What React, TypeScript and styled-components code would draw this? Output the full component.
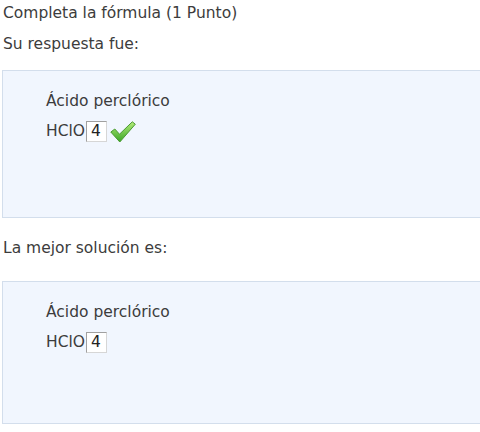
import React from 'react'
import styled, { createGlobalStyle } from 'styled-components'

const GlobalStyle = createGlobalStyle`
  html, body {
    margin: 0;
    padding: 0;
    background: #ffffff;
  }
  body {
    font-family: 'DejaVu Sans', Verdana, sans-serif;
    font-size: 15.5px;
    color: #3c3c3c;
  }
`

const Page = styled.div`
  display: flex;
  flex-direction: column;
  padding: 2px 0 0 2px;
  width: 478px;
  overflow: hidden;
`

const Line = styled.p`
  margin: 0;
  line-height: 22px;
  padding-left: 1px;
`

const Title = styled(Line)`
  margin-bottom: 9px;
`

const Heading = styled(Line)`
  margin-bottom: 15px;
`

const Label = styled(Line)`
  margin: 19px 0 22px;
`

const Panel = styled.div<{ $height: number }>`
  background: #f1f6fe;
  border: 1px solid #d3deec;
  border-right: none;
  height: ${(p) => p.$height}px;
  box-sizing: border-box;
  padding: 19px 0 0 43px;
  width: 520px;
`

const Name = styled.div`
  line-height: 22px;
  margin-bottom: 8px;
`

const Formula = styled.div`
  display: flex;
  align-items: center;
  height: 22px;
`

const Field = styled.span`
  display: inline-flex;
  align-items: center;
  box-sizing: border-box;
  width: 21px;
  height: 21px;
  padding-left: 4px;
  margin-left: 1px;
  background: #ffffff;
  border: 1px solid #d6d6d6;
  border-left-color: #a0a0a0;
  border-top-color: #a0a0a0;
  color: #222222;
`

const CheckMark = styled.svg`
  flex-shrink: 0;
  margin: 2px 0 0 3px;
`

const Check = () => (
  <CheckMark width="26" height="22" viewBox="0 0 26 22">
    <defs>
      <linearGradient id="chk" x1="0" y1="0" x2="0" y2="1">
        <stop offset="0" stopColor="#b4ec7a" />
        <stop offset="1" stopColor="#3aa526" />
      </linearGradient>
    </defs>
    <path
      d="M0.8 11 L4.8 8 L9.5 13.2 L22.3 0.8 L25.3 3.2 L9.8 21 Z"
      fill="url(#chk)"
      stroke="#4a9a32"
      strokeWidth="1"
      strokeLinejoin="round"
    />
  </CheckMark>
)

const Answer: React.FC<{ value: string; correct?: boolean; height: number }> = ({
  value,
  correct,
  height,
}) => (
  <Panel $height={height}>
    <Name>Ácido perclórico</Name>
    <Formula>
      HClO
      <Field>{value}</Field>
      {correct && <Check />}
    </Formula>
  </Panel>
)

export default function App() {
  return (
    <>
      <GlobalStyle />
      <Page>
        <Title>Completa la fórmula (1 Punto)</Title>
        <Heading>Su respuesta fue:</Heading>
        <Answer value="4" correct height={148} />
        <Label>La mejor solución es:</Label>
        <Answer value="4" height={143} />
      </Page>
    </>
  )
}
